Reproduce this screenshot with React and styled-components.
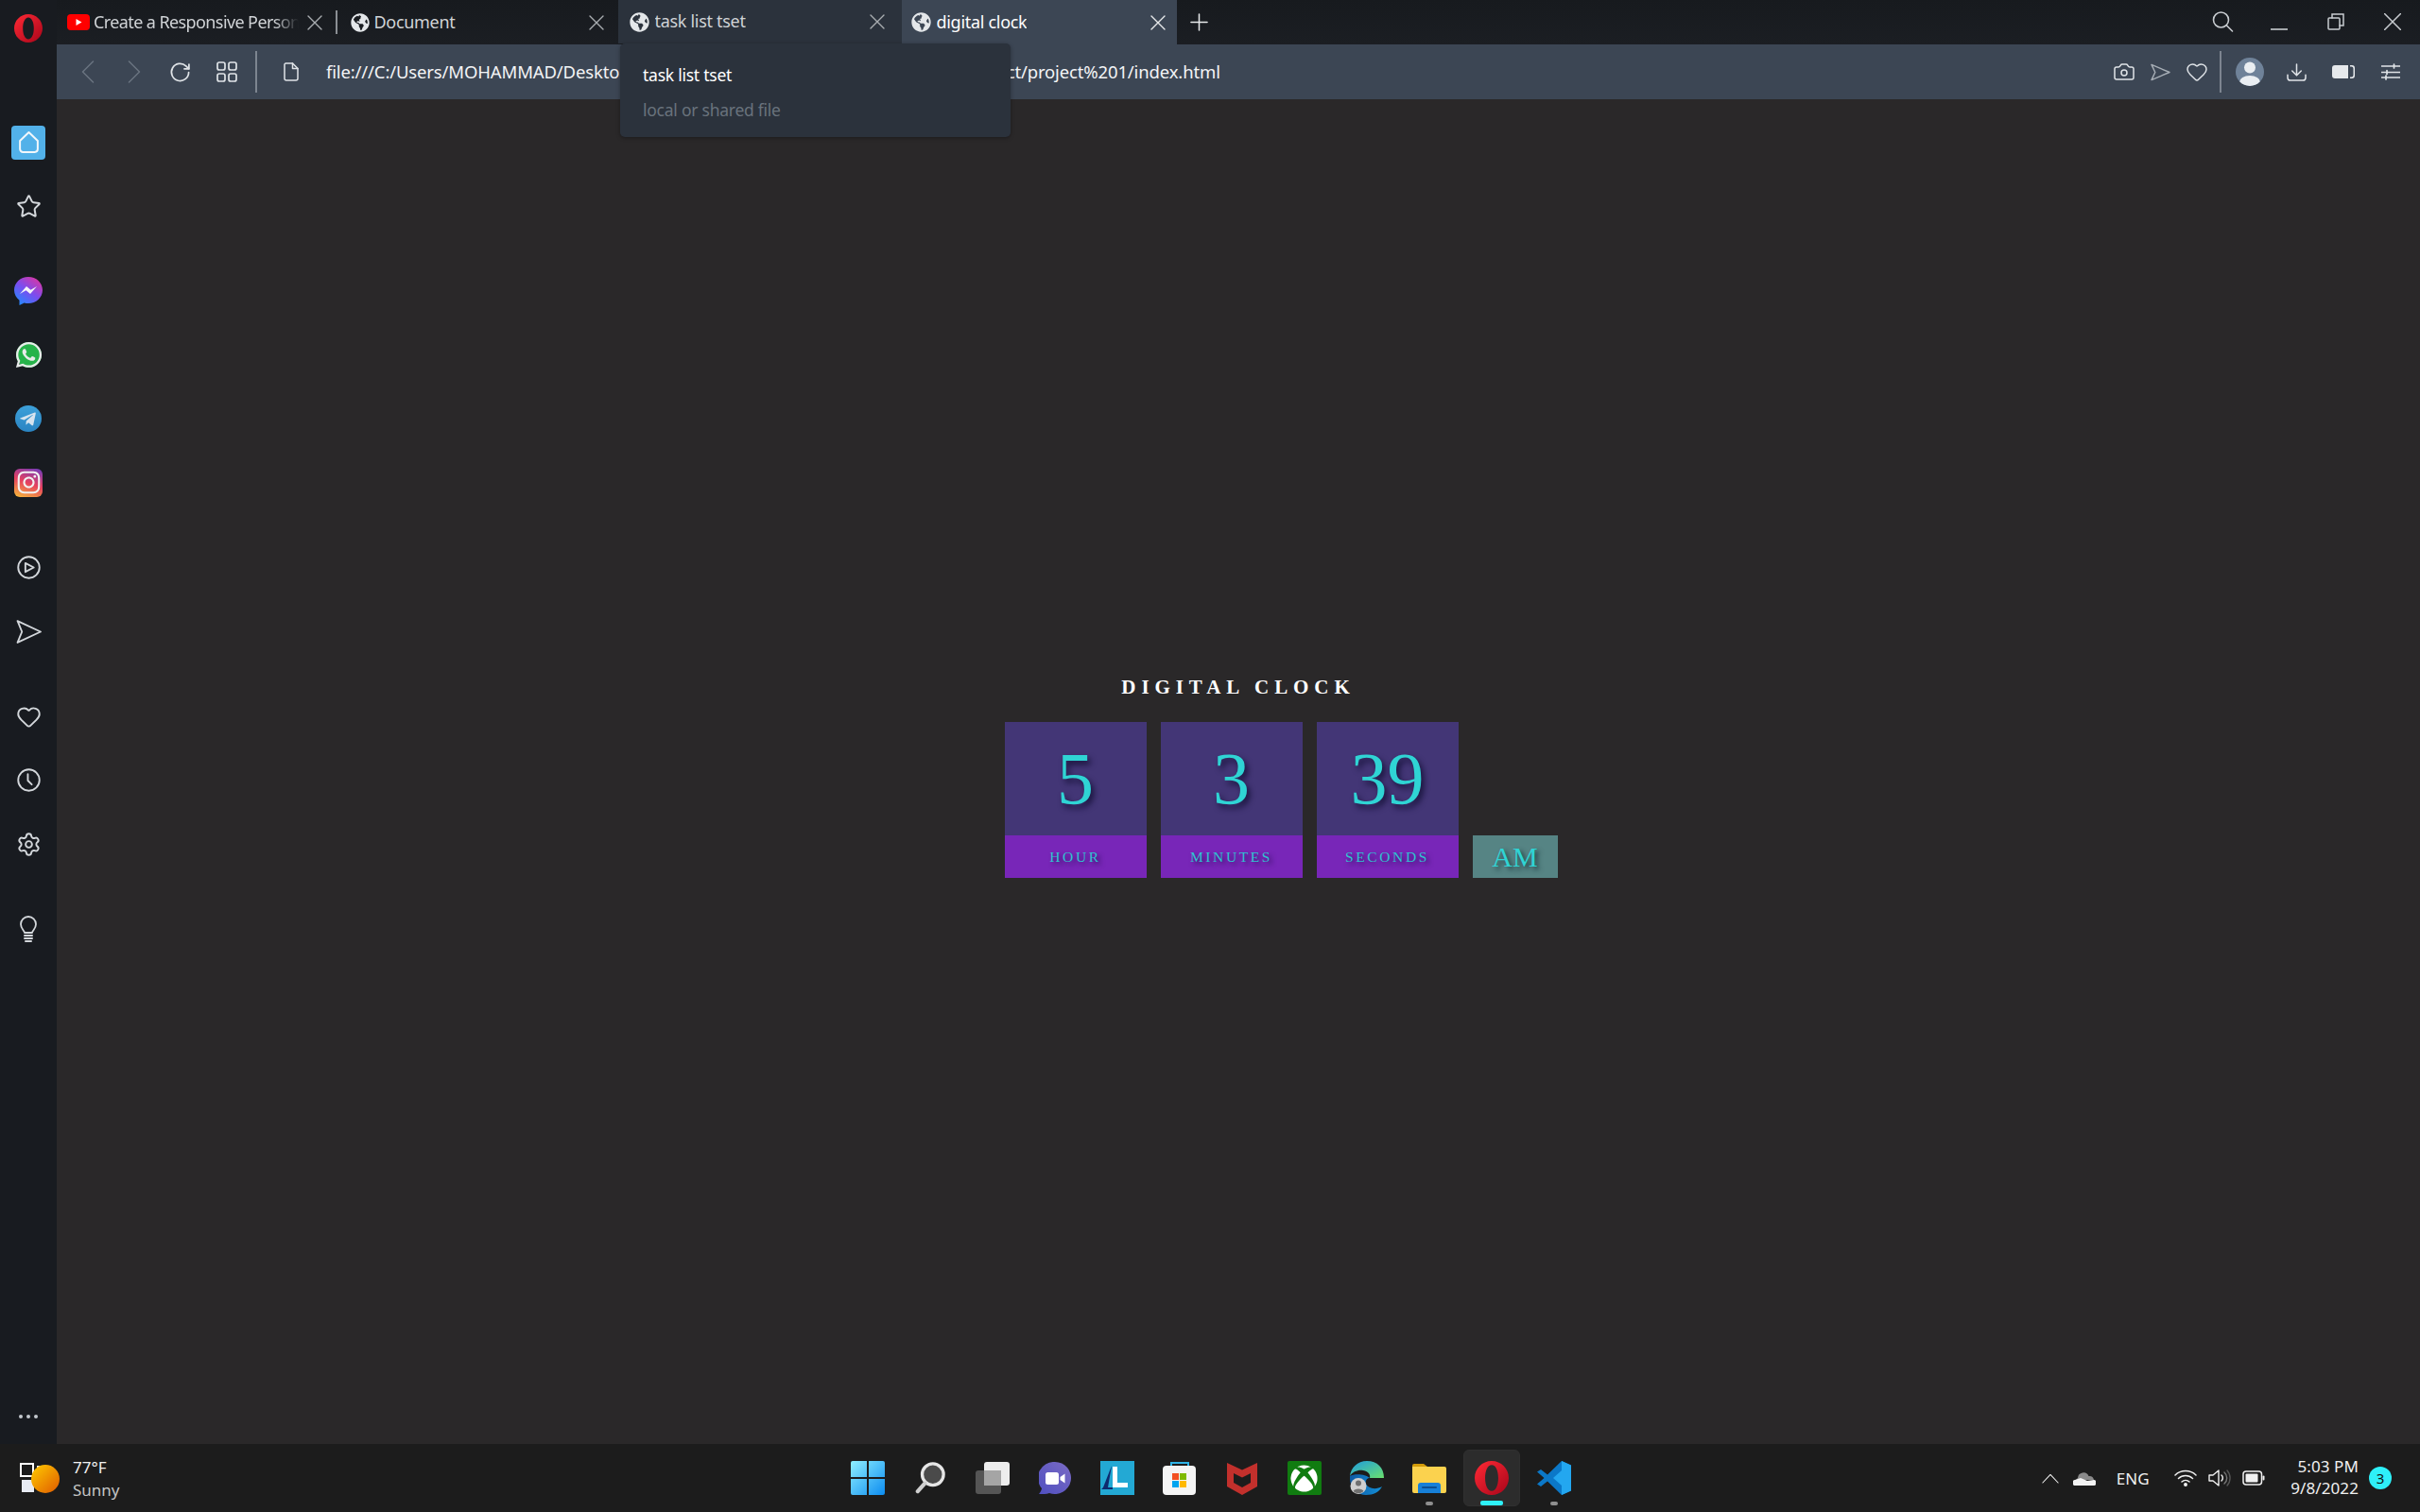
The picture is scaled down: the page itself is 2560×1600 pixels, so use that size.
import React from "react";
import styled, { createGlobalStyle } from "styled-components";
import { Star, Heart, Settings, Camera } from "lucide-react";
import { FaGlobeAmericas, FaWhatsapp, FaXbox, FaInstagram, FaTelegramPlane } from "react-icons/fa";

const Global = createGlobalStyle`
  html, body { margin: 0; padding: 0; background: #2a2829; }
  * { box-sizing: border-box; }
  body { font-family: "Noto Sans", "Open Sans", sans-serif; }
`;

const Screen = styled.div`
  width: 2560px; height: 1600px; display: flex; flex-direction: column; overflow: hidden;
  background: #2a2829;
`;
const Workspace = styled.div`display: flex; flex: 1; min-height: 0;`;
const Sidebar = styled.aside`
  width: 60px; background: #181b20; display: flex; flex-direction: column; align-items: center; padding-bottom: 20px;
`;
const LogoSlot = styled.div`height: 60px; width: 60px; display: flex; align-items: center; justify-content: center; margin-bottom: 57px;`;
const SideGroup = styled.div`display: flex; flex-direction: column; margin-bottom: 22.5px;`;
const SideItem = styled.div`
  width: 60px; height: 67.5px; display: flex; align-items: center; justify-content: center; color: #d3d7db;
`;
const HomeTile = styled.div`
  width: 36px; height: 36px; border-radius: 4px; background: #52b1e9; display: flex; align-items: center; justify-content: center; color: #f2f7fb;
`;
const MoreDots = styled.div`
  margin-top: auto; display: flex; gap: 4px; height: 18px; align-items: center;
  span { width: 4px; height: 4px; border-radius: 50%; background: #c3c8cd; }
`;
const Column = styled.div`flex: 1; display: flex; flex-direction: column; min-width: 0; position: relative;`;
const TabStrip = styled.div`
  height: 47px; display: flex; align-items: stretch; background: linear-gradient(#171a1e, #1b1e23); flex-shrink: 0;
`;
const Tab = styled.div`
  width: ${p => p.$w}px; display: flex; align-items: center; position: relative; color: ${p => p.$active ? "#fff" : "#d0d3d6"};
  padding-left: ${p => p.$pl}px; padding-right: ${p => p.$pr}px;
  background: ${p => p.$active ? "#3c4654" : p.$hover ? "#2b323c" : "transparent"};
  height: ${p => p.$hover ? "46px" : "47px"};
  font-size: 18px; letter-spacing: -0.3px;
`;
const TabSep = styled.div`width: 1.5px; height: 25px; align-self: flex-start; margin-top: 11px; background: #8b8f94;`;
const TabTitle = styled.span`
  margin-left: ${p => p.$gap}px; white-space: nowrap; overflow: hidden; flex: ${p => p.$fade ? "0 0 217px" : "0 1 auto"};
  ${p => p.$fade && "letter-spacing: -0.6px; mask-image: linear-gradient(90deg, #000 88%, transparent 100%);"}
  line-height: 47px; margin-top: -1px;
`;
const CloseSlot = styled.div`margin-left: auto; width: 16px; height: 16px; display: flex; color: ${p => p.$bright ? "#e8eaec" : "#a9adb1"};`;
const PlusSlot = styled.div`width: 20px; margin-left: 14px; display: flex; align-items: center; color: #e8eaec;`;
const WindowControls = styled.div`
  margin-left: auto; display: flex; align-items: center; margin-right: -1px; color: #c8ccd0;
`;
const WinBtn = styled.div`width: 60px; height: 47px; display: flex; align-items: center; justify-content: center; padding-bottom: 2px;`;

const Toolbar = styled.div`
  height: 58px; background: #3c4654; display: flex; align-items: center; padding: 0 6px 0 8px; flex-shrink: 0;
`;
const ToolBtn = styled.div`
  width: ${p => p.$w || 49}px; height: 58px; display: flex; align-items: center; justify-content: center; flex-shrink: 0;
  color: ${p => p.$dim ? "#6a7480" : p.$soft ? "#a7aeb6" : "#dfe3e7"};
`;
const ToolSep = styled.div`width: 2px; height: 44px; background: #7d8590; flex-shrink: 0; margin: 0 ${p => p.$r}px 0 ${p => p.$l}px;`;
const Url = styled.div`
  color: #f3f4f6; font-size: 18.5px; white-space: nowrap; letter-spacing: -0.14px; margin-left: 14px; margin-top: -1px;
`;
const RightTools = styled.div`margin-left: auto; display: flex; align-items: center;`;

const Tip = styled.div`
  position: absolute; left: 596px; top: 46px; width: 413px; height: 99px; background: #2b323c; border-radius: 5px;
  box-shadow: 0 1px 4px rgba(0,0,0,.35); padding: 20px 24px 0; z-index: 3;
`;
const TipTitle = styled.div`color: #fff; font-size: 17.5px; letter-spacing: -0.25px; line-height: 26px;`;
const TipSub = styled.div`color: #69727c; font-size: 17.5px; letter-spacing: -0.25px; line-height: 26px; margin-top: 10.5px;`;

const Page = styled.main`
  flex: 1; background: #2a2829; display: flex; flex-direction: column; align-items: center; justify-content: center;
`;
const ClockTitle = styled.h1`
  margin: 1px 0 14px; height: 45px; color: #fff; font: bold 21px/45px "Liberation Serif", serif;
  letter-spacing: 5.9px; text-transform: uppercase;
`;
const ClockRow = styled.div`width: 495px; display: flex; gap: 15px; align-items: flex-end;`;
const Unit = styled.div`width: 150px; flex-shrink: 0; display: flex; flex-direction: column;`;
const Value = styled.div`
  height: 120px; background: #433676; color: #2fd4d4; display: flex; align-items: center; justify-content: center;
  font: 78px/120px "Liberation Serif", serif; text-shadow: 3px 4px 6px rgba(10,8,40,.75);
`;
const Label = styled.div`
  height: 45px; background: #7826b8; color: #2fc3d0; display: flex; align-items: center; justify-content: center;
  font: 15.5px/44px "Liberation Serif", serif; letter-spacing: 2.6px; text-transform: uppercase;
  text-shadow: 3px 3px 5px rgba(20,10,60,.7);
`;
const Meridiem = styled.div`
  width: 90px; height: 45px; flex-shrink: 0; background: #568484; color: #2fd4d4; display: flex; align-items: center; justify-content: center;
  font: 30px/45px "Liberation Serif", serif; text-shadow: 3px 3px 5px rgba(10,30,40,.7);
`;

const Taskbar = styled.footer`
  height: 72px; background: #1c1c1c; display: grid; grid-template-columns: 1fr auto 1fr; align-items: center; flex-shrink: 0;
`;
const Weather = styled.div`display: flex; align-items: center; padding-left: 21px; gap: 14px;`;
const WeatherText = styled.div`display: flex; flex-direction: column; font-size: 17px; line-height: 24px; color: #f0f0f0; margin-top: 2px;`;
const Dim = styled.span`color: #c4c4c4;`;
const Dock = styled.div`display: flex; padding-left: 1px;`;
const DockItem = styled.div`
  width: 66px; height: 60px; display: flex; align-items: center; justify-content: center; position: relative;
  ${p => p.$active && `&::before { content: ""; position: absolute; left: 3px; right: 3px; top: 0; bottom: 0; background: #2c2c2c; border-radius: 6px; border: 1px solid #303030; }`}
  & > * { position: relative; }
`;
const RunDot = styled.span`
  position: absolute !important; bottom: 1px; left: 50%; transform: translateX(-50%); border-radius: 2px;
  width: ${p => p.$on ? 24 : 8}px; height: ${p => p.$on ? 5 : 4}px; background: ${p => p.$on ? "#2ef0f8" : "#8f8f8f"};
`;
const Tray = styled.div`display: flex; align-items: center; justify-content: flex-end; color: #f0f0f0;`;
const TraySlot = styled.div`width: ${p => p.$w}px; display: flex; justify-content: center; align-items: center; flex-shrink: 0;`;
const Lang = styled.div`font-size: 17px; width: 36px; text-align: center; margin: 0 26px 0 9px; letter-spacing: 0;`;
const TimeBox = styled.div`
  margin-left: 27px; text-align: right; font-size: 17px; line-height: 23px; margin-top: -2px; letter-spacing: .1px;
`;
const Badge = styled.div`
  width: 24px; height: 24px; border-radius: 50%; background: #2ef0f8; color: #111; font-size: 15px; display: flex; align-items: center; justify-content: center;
  margin: 0 30px 0 11px;
`;
const Glyph = styled.svg`
  width: ${p => p.$w}px; height: ${p => p.$h || p.$w}px; display: block; flex-shrink: 0; fill: none; stroke: currentColor;
  stroke-width: ${p => p.$sw || 2}; stroke-linecap: round; stroke-linejoin: round;
`;
const Art = styled.svg`width: ${p => p.$w}px; height: ${p => p.$h || p.$w}px; display: block; flex-shrink: 0;`;
const Fav = styled.span`display: flex; color: #e4e7ea; flex-shrink: 0;`;
const Disc = styled.div`
  width: ${p => p.$s}px; height: ${p => p.$s}px; border-radius: ${p => p.$r || "50%"}; background: ${p => p.$bg};
  display: flex; align-items: center; justify-content: center; color: ${p => p.$c || "#fff"};
`;

const Opera = ({ size }) => (
  <Art viewBox="0 0 30 30" $w={size}>
    <defs><linearGradient id={`op${size}`} x1="0" x2="1" y1="0" y2="1"><stop offset="0" stopColor="#ff2a35" /><stop offset="1" stopColor="#a8051a" /></linearGradient></defs>
    <path fillRule="evenodd" fill={`url(#op${size})`} d="M15 0c8.300 0 15 6.700 15 15s-6.700 15-15 15S0 23.300 0 15 6.700 0 15 0zm0 3.500c-3.600 0-5.800 5.200-5.800 11.500S11.400 26.500 15 26.500 20.800 21.300 20.800 15 18.600 3.500 15 3.500z" />
  </Art>
);
const X = ({ s = 16, sw = 1.4 }) => <Glyph viewBox="0 0 16 16" $w={s} $sw={sw}><path d="M1 1l14 14M15 1L1 15" /></Glyph>;
const Globe = ({ s }) => <Fav><FaGlobeAmericas size={s} /></Fav>;

const Clock = () => (
  <Page>
    <ClockTitle>Digital Clock</ClockTitle>
    <ClockRow>
      {[["5", "Hour"], ["3", "Minutes"], ["39", "Seconds"]].map(([v, l]) => (
        <Unit key={l}><Value>{v}</Value><Label>{l}</Label></Unit>
      ))}
      <Meridiem>AM</Meridiem>
    </ClockRow>
  </Page>
);

export default function App() {
  return (
    <Screen>
      <Global />
      <Workspace>
        <Sidebar>
          <LogoSlot><Opera size={30} /></LogoSlot>
          <SideGroup>
            <SideItem><HomeTile><Glyph viewBox="0 0 24 24" $w={25} $sw={1.9}><path d="M3 10.500L12 2l9 8.500V19a3 3 0 0 1-3 3H6a3 3 0 0 1-3-3z" /></Glyph></HomeTile></SideItem>
            <SideItem><Star size={27} strokeWidth={1.8} /></SideItem>
          </SideGroup>
          <SideGroup>
            <SideItem>
              <Art viewBox="0 0 30 30" $w={30}>
                <defs><linearGradient id="msg" x1="0.150" x2="0.850" y1="1" y2="0"><stop offset="0" stopColor="#1f8dff" /><stop offset="0.5" stopColor="#7a4df0" /><stop offset="1" stopColor="#e0359f" /></linearGradient></defs>
                <path fill="url(#msg)" d="M15 0c8.300 0 15 6.200 15 14s-6.700 14-15 14c-1.500 0-3-.2-4.300-.6L5.500 30v-5.300C2.100 22.100 0 18.300 0 14 0 6.200 6.700 0 15 0z" />
                <path fill="#f4f4f8" d="M6 18l7-8 4.500 3.800L24 10l-7 8-4.500-3.800z" />
              </Art>
            </SideItem>
            <SideItem>
              <Disc $s={27} $bg="#26b34a"><FaWhatsapp size={31} color="#e8ecea" style={{ flexShrink: 0 }} /></Disc>
            </SideItem>
            <SideItem>
              <Disc $s={28} $bg="linear-gradient(#3da1da,#2a84c2)" $c="#d6e4ef"><FaTelegramPlane size={19} style={{ marginLeft: -2 }} /></Disc>
            </SideItem>
            <SideItem>
              <Disc $s={30} $r="6px" $bg="linear-gradient(20deg,#f6b23c 5%,#e6405f 50%,#7a3db8 95%)" $c="#f2f2f2"><FaInstagram size={27} /></Disc>
            </SideItem>
          </SideGroup>
          <SideGroup>
            <SideItem><Glyph viewBox="0 0 24 24" $w={25} $sw={1.8}><circle cx="12" cy="12" r="10.800" /><path d="M8.500 7.500L17 12l-8.500 4.500z" /></Glyph></SideItem>
            <SideItem><Glyph viewBox="0 0 26 26" $w={27} $sw={1.8}><path d="M1.500 2L25 13 1.500 24 6 13z" /></Glyph></SideItem>
          </SideGroup>
          <SideGroup>
            <SideItem><Heart size={27} strokeWidth={1.7} /></SideItem>
            <SideItem><Glyph viewBox="0 0 24 24" $w={25} $sw={1.8}><circle cx="12" cy="12" r="10.800" /><path d="M11 6v6.500l4 4" /></Glyph></SideItem>
            <SideItem><Settings size={27} strokeWidth={1.7} /></SideItem>
          </SideGroup>
          <SideItem>
            <Glyph viewBox="0 0 20 28" $w={20} $h={28} $sw={1.8}><path d="M6 18c0-2-4-4-4-9a8 8 0 0 1 16 0c0 5-4 7-4 9z" /><path d="M6 21h8M6 24h8M7 27h6" strokeWidth="2" /></Glyph>
          </SideItem>
          <MoreDots><span /><span /><span /></MoreDots>
        </Sidebar>
        <Column>
          <TabStrip>
            <Tab $w={295} $pl={11} $pr={14}>
              <Art viewBox="0 0 24 17" $w={24} $h={17}><rect width="24" height="17" rx="4" fill="#f00" /><path d="M9.500 5l6 3.500-6 3.500z" fill="#fff" /></Art>
              <TabTitle $gap={4} $fade>Create a Responsive Personal</TabTitle>
              <CloseSlot><X /></CloseSlot>
            </Tab>
            <TabSep />
            <Tab $w={297} $pl={14} $pr={15}>
              <Globe s={20} />
              <TabTitle $gap={5}>Document</TabTitle>
              <CloseSlot><X /></CloseSlot>
            </Tab>
            <Tab $w={300} $pl={12} $pr={18} $hover>
              <Globe s={21} />
              <TabTitle $gap={6}>task list tset</TabTitle>
              <CloseSlot><X /></CloseSlot>
            </Tab>
            <Tab $w={291} $pl={10} $pr={12} $active>
              <Globe s={21} />
              <TabTitle $gap={6}>digital clock</TabTitle>
              <CloseSlot $bright><X /></CloseSlot>
            </Tab>
            <PlusSlot><Glyph viewBox="0 0 20 20" $w={19} $sw={1.6}><path d="M10 1v18M1 10h18" /></Glyph></PlusSlot>
            <WindowControls>
              <WinBtn><Glyph viewBox="0 0 24 24" $w={24} $sw={1.6}><circle cx="10.500" cy="10" r="8" /><path d="M16.500 16l6 6" /></Glyph></WinBtn>
              <WinBtn><Glyph viewBox="0 0 18 18" $w={18} $sw={1.6}><path d="M0 17h18" strokeLinecap="butt" /></Glyph></WinBtn>
              <WinBtn><Glyph viewBox="0 0 18 18" $w={18} $sw={1.5}><rect x="1" y="5" width="12" height="12" rx="1" strokeLinejoin="miter" /><path d="M5 5V1h12v12h-4" strokeLinejoin="miter" /></Glyph></WinBtn>
              <WinBtn><Glyph viewBox="0 0 18 18" $w={18} $sw={1.5}><path d="M0.500 0.500l17 17M17.500 0.500l-17 17" /></Glyph></WinBtn>
            </WindowControls>
          </TabStrip>
          <Toolbar>
            <ToolBtn $dim><Glyph viewBox="0 0 14 24" $w={14} $h={24} $sw={1.5}><path d="M12.500 1L1.500 12l11 11" /></Glyph></ToolBtn>
            <ToolBtn $dim><Glyph viewBox="0 0 14 24" $w={14} $h={24} $sw={1.5}><path d="M1.500 1l11 11-11 11" /></Glyph></ToolBtn>
            <ToolBtn><Glyph viewBox="0 0 24 24" $w={23} $sw={1.8}><path d="M21.500 12a9.500 9.500 0 1 1-3-7L21.500 8" /><path d="M21.800 2.500V8.300H16" strokeLinecap="butt" /></Glyph></ToolBtn>
            <ToolBtn><Glyph viewBox="0 0 22 22" $w={22} $sw={1.7}><rect x="1" y="1" width="8" height="8" rx="2" /><rect x="13" y="1" width="8" height="8" rx="2" /><rect x="1" y="13" width="8" height="8" rx="2" /><rect x="13" y="13" width="8" height="8" rx="2" /></Glyph></ToolBtn>
            <ToolSep $l={6} $r={13} />
            <ToolBtn $w={46}><Glyph viewBox="0 0 16 20" $w={16} $h={20} $sw={1.5}><path d="M2 1h7.500L15 6.500V17a2 2 0 0 1-2 2H3a2 2 0 0 1-2-2V2z" /><path d="M9.500 1v5.500H15" /></Glyph></ToolBtn>
            <Url>file:///C:/Users/MOHAMMAD/Desktop/development/javascript/digital%20clock/project/project%201/index.html</Url>
            <RightTools>
              <ToolBtn $w={38}><Camera size={24} strokeWidth={1.5} /></ToolBtn>
              <ToolBtn $w={38} $soft><Glyph viewBox="0 0 22 20" $w={21} $h={19} $sw={1.5}><path d="M1 1.500L21 10 1 18.500 5 10z" /></Glyph></ToolBtn>
              <ToolBtn $w={39}><Heart size={24} strokeWidth={1.5} /></ToolBtn>
              <ToolSep $l={5} $r={5} />
              <ToolBtn $w={49}>
                <Art viewBox="0 0 30 30" $w={30}>
                  <defs><clipPath id="av"><circle cx="15" cy="15" r="15" /></clipPath></defs>
                  <circle cx="15" cy="15" r="15" fill="#6f8299" />
                  <g clipPath="url(#av)" fill="#eaeef2"><circle cx="15" cy="10.500" r="6" /><ellipse cx="15" cy="26" rx="11" ry="7" /></g>
                </Art>
              </ToolBtn>
              <ToolBtn $w={50}><Glyph viewBox="0 0 22 20" $w={21} $h={19} $sw={1.6}><path d="M11 1v12M6 8.500l5 5 5-5" /><path d="M1 13v3a3 3 0 0 0 3 3h14a3 3 0 0 0 3-3v-3" /></Glyph></ToolBtn>
              <ToolBtn $w={49}>
                <Art viewBox="0 0 24 14" $w={24} $h={14}><path fill="#e6e9ec" d="M3 0h14v14H3a3 3 0 0 1-3-3V3a3 3 0 0 1 3-3z" /><path fill="#e6e9ec" d="M19 0h2a3 3 0 0 1 3 3v8a3 3 0 0 1-3 3h-2v-1.500h1.500a2 2 0 0 0 2-2v-7a2 2 0 0 0-2-2H19z" /></Art>
              </ToolBtn>
              <ToolBtn $w={51}><Glyph viewBox="0 0 20 18" $w={20} $h={18} $sw={1.7}><path d="M0 3h20M0 9.500h20M0 15h20" strokeLinecap="butt" /><path d="M13.500 1v4M6 7.500v4M5 13v4" /></Glyph></ToolBtn>
            </RightTools>
          </Toolbar>
          <Clock />
          <Tip>
            <TipTitle>task list tset</TipTitle>
            <TipSub>local or shared file</TipSub>
          </Tip>
        </Column>
      </Workspace>
      <Taskbar>
        <Weather>
          <Art viewBox="0 0 42 32" $w={42} $h={32}>
            <defs><linearGradient id="sun" x1="0" x2="1" y1="0" y2="1"><stop offset="0" stopColor="#ffcc00" /><stop offset="1" stopColor="#e05a00" /></linearGradient></defs>
            <rect x="1" y="1" width="13" height="13" fill="none" stroke="#fff" strokeWidth="2" />
            <rect x="2" y="18" width="13" height="13" fill="#e8ecf4" />
            <rect x="18" y="3" width="6" height="6" fill="#e8ecf4" />
            <circle cx="27" cy="17" r="15" fill="url(#sun)" />
          </Art>
          <WeatherText><span>77°F</span><Dim>Sunny</Dim></WeatherText>
        </Weather>
        <Dock>
          <DockItem>
            <Art viewBox="0 0 36 36" $w={36}>
              <defs><linearGradient id="win" x1="0" x2="1" y1="0" y2="1"><stop offset="0" stopColor="#8ff0ff" /><stop offset="1" stopColor="#0c8cf0" /></linearGradient></defs>
              <path fill="url(#win)" d="M2 0h15v17H0V2a2 2 0 0 1 2-2zM19 0h15a2 2 0 0 1 2 2v15H19zM0 19h17v17H2a2 2 0 0 1-2-2zM19 19h17v15a2 2 0 0 1-2 2H19z" />
            </Art>
          </DockItem>
          <DockItem>
            <Art viewBox="0 0 34 36" $w={32} $h={34}>
              <circle cx="20" cy="14" r="12" fill="#4a4a4a" stroke="#e6e6e6" strokeWidth="3.500" />
              <path d="M11 24L3 33" stroke="#cfcfcf" strokeWidth="4.500" strokeLinecap="round" />
            </Art>
          </DockItem>
          <DockItem>
            <Art viewBox="0 0 36 34" $w={36} $h={34}>
              <rect x="9" y="0" width="27" height="25" rx="3" fill="#ededed" />
              <rect x="0" y="9" width="27" height="25" rx="3" fill="#5a5a5a" fillOpacity=".92" />
              <rect x="9" y="9" width="18" height="16" fill="#a5a5a5" />
            </Art>
          </DockItem>
          <DockItem>
            <Art viewBox="0 0 34 34" $w={34}>
              <defs><linearGradient id="ch" x1="1" x2="0" y1="0" y2="1"><stop offset="0" stopColor="#7b6bc4" /><stop offset="1" stopColor="#4f4fc0" /></linearGradient></defs>
              <path fill="url(#ch)" d="M17 0a17 17 0 1 1-6 32.900C8 34 3.500 34 0 34c1.700-1.800 2.700-4 3-6A17 17 0 0 1 17 0z" />
              <rect x="7" y="11" width="14" height="13" rx="2.500" fill="#fff" /><path d="M22.500 16l5-3.500v10l-5-3.500z" fill="#fff" />
            </Art>
          </DockItem>
          <DockItem>
            <Art viewBox="0 0 36 36" $w={36}>
              <rect width="36" height="36" fill="#23a9d4" />
              <path d="M12 5L8 28H3z" fill="#0e2a6e" />
              <path d="M3 28h10v2H1z" fill="#0e2a6e" />
              <path d="M13 6h5v17h11v5H13z" fill="#fff" />
            </Art>
          </DockItem>
          <DockItem>
            <Art viewBox="0 0 36 36" $w={36}>
              <path d="M9 5V2h18v3" fill="none" stroke="#2fb3e6" strokeWidth="2" />
              <rect y="5" width="35" height="31" rx="4" fill="#f4f4f4" />
              <rect x="10" y="13" width="7" height="7" fill="#f25022" /><rect x="18" y="13" width="7" height="7" fill="#7fba00" />
              <rect x="10" y="21" width="7" height="7" fill="#00a4ef" /><rect x="18" y="21" width="7" height="7" fill="#ffb900" />
            </Art>
          </DockItem>
          <DockItem>
            <Art viewBox="0 0 32 36" $w={32} $h={36}>
              <path fillRule="evenodd" fill="#c2302c" d="M0 2l16 7.500L32 2v25l-16 9-16-9zM7 13v10l9 5 9-5V13l-9 4.500z" />
            </Art>
          </DockItem>
          <DockItem>
            <Disc $s={36} $r="2px" $bg="#107c10"><FaXbox size={29} /></Disc>
          </DockItem>
          <DockItem>
            <Art viewBox="0 0 36 36" $w={36}>
              <defs>
                <linearGradient id="ed1" x1="0" x2="1" y1="0" y2="1"><stop offset="0" stopColor="#1e9be0" /><stop offset="1" stopColor="#6ae06e" /></linearGradient>
                <linearGradient id="ed2" x1="0" x2="1" y1="0" y2="0"><stop offset="0" stopColor="#0c59a4" /><stop offset="1" stopColor="#1490d8" /></linearGradient>
              </defs>
              <path fill="url(#ed1)" d="M18 0C8 0 1 7 0 16c3-5 9-7 14-6 6 1 8 5 7 8h15c0-11-7-18-18-18z" />
              <path fill="url(#ed2)" d="M0 16c-1 11 7 20 17 20 8 0 14-3 17-9-7 4-15 2-17-3-1-3 1-6 4-6-4-4-16-5-21-2z" />
              <circle cx="9" cy="26.500" r="8.500" fill="#cfcfcf" /><circle cx="9" cy="23.500" r="3" fill="#707070" /><path d="M3.500 32c1-3.500 10-3.500 11 0a8 8 0 0 1-11 0z" fill="#707070" />
            </Art>
          </DockItem>
          <DockItem>
            <Art viewBox="0 0 36 32" $w={36} $h={32}>
              <path d="M0 3a2 2 0 0 1 2-2h10l4 3h-16z" fill="#d39b0a" />
              <path d="M0 4h34a2 2 0 0 1 2 2v24a2 2 0 0 1-2 2H2a2 2 0 0 1-2-2z" fill="#fbd24e" />
              <path d="M6 32V24a3 3 0 0 1 3-3h18a3 3 0 0 1 3 3v8z" fill="#1780d8" />
              <rect x="10" y="25" width="16" height="2" rx="1" fill="#0b4f93" />
            </Art>
            <RunDot />
          </DockItem>
          <DockItem $active>
            <Opera size={36} />
            <RunDot $on />
          </DockItem>
          <DockItem>
            <Art viewBox="0 0 36 36" $w={36}>
              <path d="M26 0l10 4.500v27L26 36 11 21.500l-7 5.500-4-2.500 7.500-6.500L0 11.500 4 9l7 5.500z" fill="#0b78c8" />
              <path d="M26 0l10 4.500v27L26 36zM26 10l-9 8 9 8z" fill="#23a7f0" fillRule="evenodd" />
            </Art>
            <RunDot />
          </DockItem>
        </Dock>
        <Tray>
          <TraySlot $w={24}><Glyph viewBox="0 0 20 12" $w={18} $h={11} $sw={1.2}><path d="M1 11l9-9.500 9 9.500" /></Glyph></TraySlot>
          <TraySlot $w={48}>
            <Art viewBox="0 0 24 16" $w={24} $h={16}><path fill="#8a8a8a" d="M5 8a6 6 0 0 1 11.500-2A5 5 0 0 1 22 10H3z" /><path fill="#f2f2f2" d="M3 16a3 3 0 0 1-1-6l6-2 7 3 7-1a3 3 0 0 1-1 6z" /></Art>
          </TraySlot>
          <Lang>ENG</Lang>
          <TraySlot $w={24}>
            <Glyph viewBox="0 0 24 18" $w={24} $h={18} $sw={1.500}><path d="M1 6a16 16 0 0 1 22 0M4.500 9.500a11 11 0 0 1 15 0M8 13a6 6 0 0 1 8 0" /><circle cx="12" cy="16" r="1.200" fill="currentColor" /></Glyph>
          </TraySlot>
          <TraySlot $w={48}>
            <Glyph viewBox="0 0 24 20" $w={24} $h={20} $sw={1.400}><path d="M1 7h4l6-5v16l-6-5H1z" /><path d="M14 7a4 4 0 0 1 0 6" /><path d="M17 4a8 8 0 0 1 0 12" stroke="#777" /><path d="M20 2a12 12 0 0 1 0 16" stroke="#555" /></Glyph>
          </TraySlot>
          <TraySlot $w={24}>
            <Art viewBox="0 0 24 16" $w={24} $h={16}><rect x="1" y="1" width="19.500" height="14" rx="3" fill="none" stroke="#f0f0f0" strokeWidth="1.500" /><rect x="3.500" y="3.500" width="13" height="9" rx="1" fill="#f0f0f0" /><rect x="21.500" y="5.500" width="2" height="5" rx="1" fill="#f0f0f0" /></Art>
          </TraySlot>
          <TimeBox>5:03 PM<br />9/8/2022</TimeBox>
          <Badge>3</Badge>
        </Tray>
      </Taskbar>
    </Screen>
  );
}
